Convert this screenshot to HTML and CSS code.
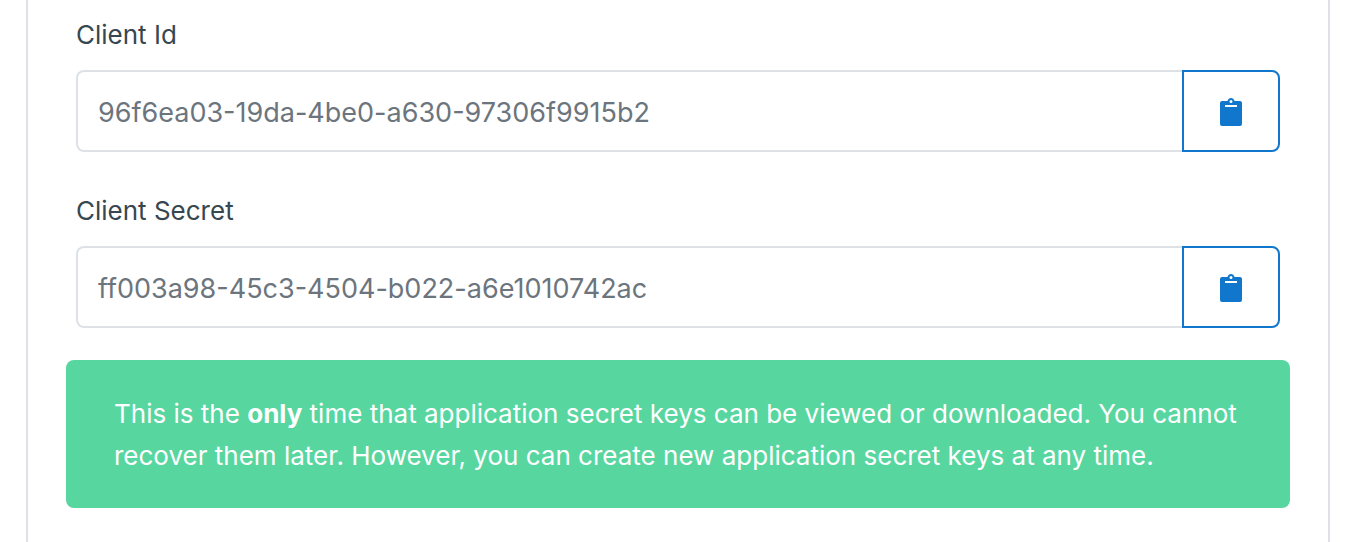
FILE: index.html
```html
<!DOCTYPE html>
<html lang="en">
<head>
<meta charset="utf-8">
<meta name="viewport" content="width=device-width, initial-scale=1">
<title>Application keys</title>
<link rel="stylesheet" href="styles.css">
</head>
<body>
<main class="card">
  <div class="fields">
    <div class="field">
      <label class="label" for="client-id">Client Id</label>
      <div class="group">
        <input class="value" id="client-id" type="text" readonly value="96f6ea03-19da-4be0-a630-97306f9915b2">
        <button class="copy" type="button" aria-label="Copy client id">
          <svg class="icon" viewBox="0 0 22 28" aria-hidden="true"><path fill="currentColor" fill-rule="evenodd" d="M2 3H7.500C8 1 9.300 0 11 0S14 1 14.500 3H20A2 2 0 0 1 22 5V26A2 2 0 0 1 20 28H2A2 2 0 0 1 0 26V5A2 2 0 0 1 2 3ZM11 2A1.500 1.500 0 1 0 11 5A1.500 1.500 0 1 0 11 2ZM5 7V9H17V7Z"/></svg>
        </button>
      </div>
    </div>
    <div class="field">
      <label class="label" for="client-secret">Client Secret</label>
      <div class="group">
        <input class="value" id="client-secret" type="text" readonly value="ff003a98-45c3-4504-b022-a6e1010742ac">
        <button class="copy" type="button" aria-label="Copy client secret">
          <svg class="icon" viewBox="0 0 22 28" aria-hidden="true"><path fill="currentColor" fill-rule="evenodd" d="M2 3H7.500C8 1 9.300 0 11 0S14 1 14.500 3H20A2 2 0 0 1 22 5V26A2 2 0 0 1 20 28H2A2 2 0 0 1 0 26V5A2 2 0 0 1 2 3ZM11 2A1.500 1.500 0 1 0 11 5A1.500 1.500 0 1 0 11 2ZM5 7V9H17V7Z"/></svg>
        </button>
      </div>
    </div>
  </div>
  <p class="alert">This is the <strong>only</strong> time that application secret keys can be viewed or downloaded. You cannot recover them later. However, you can create new application secret keys at any time.</p>
</main>
</body>
</html>
```
FILE: styles.css
```css
* {
  box-sizing: border-box;
}

body {
  margin: 0;
  padding: 0 20px 0 26px;
  background: #fff;
  color: #37474f;
  font: 26px/42px Inter, "Liberation Sans", sans-serif;
}

.card {
  min-height: 100vh;
  padding: 14px 38px 32px;
  border: solid #dee2e6;
  border-width: 0 2px;
}

.fields {
  display: flex;
  flex-direction: column;
  gap: 38px;
  padding: 0 10px;
  margin-bottom: 32px;
}

.label {
  display: block;
  margin-bottom: 14px;
}

.group {
  display: flex;
}

.value {
  flex: 1;
  min-width: 0;
  padding: 20px 20px 16px;
  border: 2px solid #dee2e6;
  border-right: 0;
  border-radius: 8px 0 0 8px;
  background: #fff;
  color: #6c757d;
  font: inherit;
  font-size: 27px;
}

.copy {
  display: flex;
  align-items: center;
  justify-content: center;
  width: 98px;
  padding: 2px 0 0;
  border: 2px solid #1177cc;
  border-radius: 0 8px 8px 0;
  background: #fff;
  color: #1177cc;
  cursor: pointer;
}

.icon {
  width: 22px;
  height: 28px;
}

.alert {
  margin: 0;
  padding: 33px 48px 31px;
  border-radius: 8px;
  background: #58d6a0;
  color: #fff;
}
```
